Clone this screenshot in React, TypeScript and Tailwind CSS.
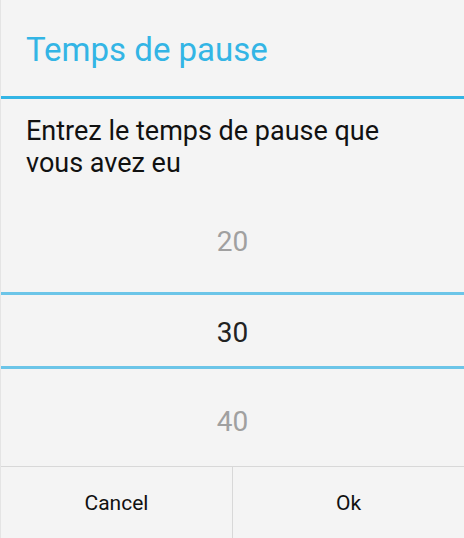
const values = { prev: "20", current: "30", next: "40" };

const App = () => {
  return (
    <div
      className="w-[464px] h-[538px] bg-[#f4f4f4] border-l border-[#e4e4e4] flex flex-col overflow-hidden"
      style={{ fontFamily: "Roboto, 'Noto Sans', sans-serif" }}
    >
      {/* title */}
      <div className="h-[96px] shrink-0 flex items-center pl-[25px] pt-[2px]">
        <h1 className="text-[33px] leading-none text-[#33b5e5]">Temps de pause</h1>
      </div>
      <div className="h-[3px] shrink-0 bg-[#33b5e5]" />

      {/* message */}
      <p className="shrink-0 pt-[16px] pl-[25px] pr-[40px] text-[27px] leading-[32px] text-[#111111]">
        Entrez le temps de pause que vous avez eu
      </p>

      {/* number picker */}
      <div className="shrink-0 flex flex-col text-center text-[28px] leading-[32px]">
        <div className="pt-[47px] pb-[34px] text-[#a0a0a0]">{values.prev}</div>
        <div className="h-[3px] bg-[#6cc5e8]" />
        <div className="pt-[22px] pb-[17px] text-[#222222]">{values.current}</div>
        <div className="h-[3px] bg-[#6cc5e8]" />
        <div className="pt-[37px] pb-[28px] text-[#a0a0a0]">{values.next}</div>
      </div>

      {/* buttons */}
      <div className="shrink-0 h-[72px] border-t border-[#d8d8d8] flex text-[21px] text-[#111111]">
        <button className="flex-1 flex items-center justify-center pt-[3px] border-r border-[#d8d8d8]">Cancel</button>
        <button className="flex-1 flex items-center justify-center pt-[3px]">Ok</button>
      </div>
    </div>
  );
};

export default App;
